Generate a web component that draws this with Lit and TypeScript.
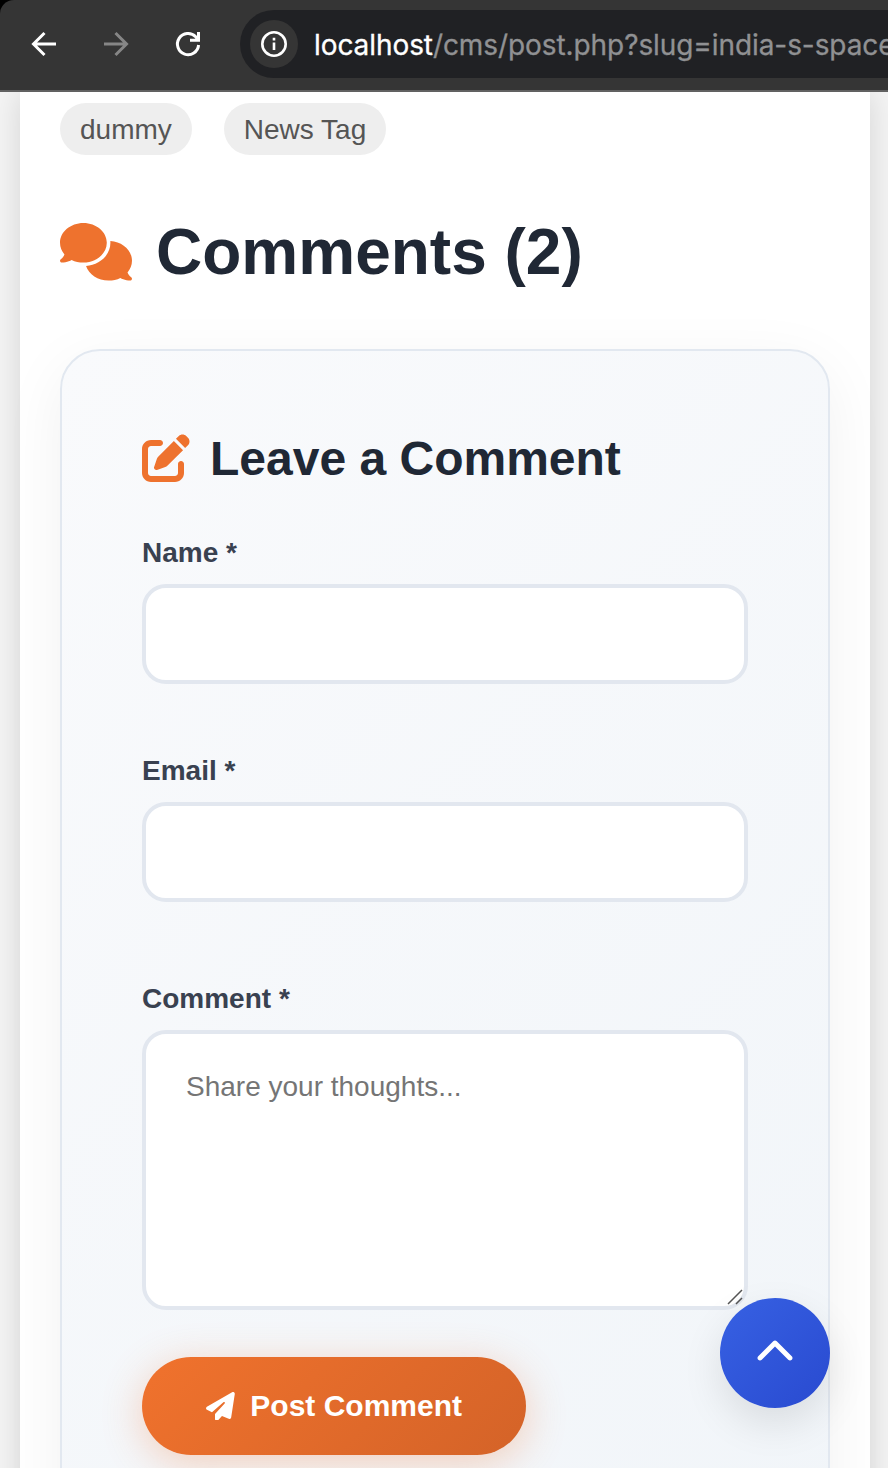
import { LitElement, html, css, svg } from "lit";
import { customElement } from "lit/decorators.js";

const icon = (cls: string, viewBox: string, d: string) =>
  html`<svg class="icon ${cls}" viewBox=${viewBox} fill="currentColor" aria-hidden="true">${svg`<path d=${d}></path>`}</svg>`;

const COMMENTS =
  "M208 352c114.9 0 208-78.8 208-176S322.9 0 208 0S0 78.8 0 176c0 38.6 14.7 74.3 39.6 103.4c-3.5 9.4-8.7 17.7-14.2 24.7c-4.8 6.2-9.7 11-13.3 14.3c-1.8 1.6-3.3 2.9-4.3 3.7c-.5 .4-.9 .7-1.1 .8l-.2 .2C1 327.2-1.4 334.4 .8 340.9S9.1 352 16 352c21.8 0 43.8-5.6 62.1-12.5c9.2-3.5 17.8-7.4 25.3-11.4C134.1 343.3 169.8 352 208 352zM448 176c0 112.3-99.1 196.9-216.5 207C255.8 457.4 336.4 512 432 512c38.2 0 73.9-8.7 104.7-23.9c7.5 4 16 7.9 25.2 11.4c18.3 6.9 40.3 12.5 62.1 12.5c6.9 0 13.1-4.5 15.2-11.1c2.1-6.6-.2-13.8-5.8-17.9l-.2-.2c-.2-.2-.6-.4-1.1-.8c-1-.8-2.5-2-4.3-3.7c-3.6-3.3-8.5-8.1-13.3-14.3c-5.5-7-10.7-15.4-14.2-24.7c24.9-29 39.6-64.7 39.6-103.4c0-92.8-84.9-168.9-192.6-175.5c.4 5.1 .6 10.3 .6 15.5z";
const EDIT =
  "M471.6 21.7c-21.9-21.9-57.3-21.9-79.2 0L362.3 51.7l97.9 97.9 30.1-30.1c21.9-21.9 21.9-57.3 0-79.2L471.6 21.7zm-299.2 220c-6.1 6.1-10.8 13.6-13.5 21.9l-29.6 88.8c-2.9 8.6-.6 18.1 5.8 24.6s15.9 8.7 24.6 5.8l88.8-29.6c8.2-2.7 15.7-7.4 21.9-13.5L437.7 172.3 339.7 74.3 172.4 241.7zM96 64C43 64 0 107 0 160L0 416c0 53 43 96 96 96l256 0c53 0 96-43 96-96l0-96c0-17.7-14.3-32-32-32s-32 14.3-32 32l0 96c0 17.7-14.3 32-32 32L96 448c-17.7 0-32-14.3-32-32l0-256c0-17.7 14.3-32 32-32l96 0c17.7 0 32-14.3 32-32s-14.3-32-32-32L96 64z";
const PLANE =
  "M498.1 5.6c10.1 7 15.4 19.1 13.5 31.2l-64 416c-1.5 9.7-7.4 18.2-16 23s-18.9 5.4-28 1.6L284 427.7l-68.5 74.1c-8.9 9.7-22.9 12.9-35.2 8.1S160 493.2 160 480l0-83.6c0-4 1.5-7.8 4.2-10.8L331.8 202.8c5.8-6.3 5.6-16-.4-22s-15.7-6.4-22-.7L106 360.8 17.7 316.6C7.1 311.3 .3 300.7 0 288.9s5.9-22.8 16.1-28.7l448-256c10.7-6.1 23.9-5.5 34 1.4z";
const CHEVRON =
  "M233.4 105.4c12.5-12.5 32.8-12.5 45.3 0l192 192c12.5 12.5 12.5 32.8 0 45.3s-32.8 12.5-45.3 0L256 173.3 86.6 342.6c-12.5 12.5-32.8 12.5-45.3 0s-12.5-32.8 0-45.3l192-192z";

@customElement("browser-bar")
export class BrowserBar extends LitElement {
  static styles = css`
    :host { display: block; background: #000; }
    .bar {
      box-sizing: border-box; height: 92px; display: flex; align-items: flex-start;
      background: #353535; border-bottom: 2px solid #616161;
      border-top-left-radius: 14px; padding: 10px 0 0 28px; overflow: hidden;
    }
    .nav { display: flex; gap: 40px; height: 68px; align-items: center; width: 212px; flex: none; }
    .nav svg { width: 32px; height: 32px; flex: none; fill: none; stroke: #fff; stroke-width: 3; }
    .nav .dim { stroke: #868686; }
    .address {
      flex: 1 0 auto; height: 68px; border-radius: 34px 0 0 34px; background: #202124;
      display: flex; align-items: center; padding-left: 10px; gap: 16px;
      font: 28px/34px Inter, sans-serif; color: #909193; white-space: nowrap;
    }
    .info {
      width: 48px; height: 48px; border-radius: 50%; background: #353535;
      display: grid; place-items: center;
    }
    .info svg { width: 28px; height: 28px; fill: none; stroke: #fff; }
    .url { letter-spacing: -0.08px; padding-top: 1px; }
    .host { color: #fff; -webkit-text-stroke: 0.3px #fff; }
    .path { -webkit-text-stroke: 0.3px #909193; }
  `;
  render() {
    return html`<div class="bar">
      <div class="nav">
        <svg viewBox="0 0 32 32"><path d="M28 16H6M16.500 5L5.500 16L16.500 27"></path></svg>
        <svg class="dim" viewBox="0 0 32 32"><path d="M4 16H26M15.500 5L26.500 16L15.500 27"></path></svg>
        <svg viewBox="0 0 32 32"><path d="M26.600 17A10.600 10.600 0 1 1 23.700 8.700L26 11.500M26.500 4V12.300H18"></path></svg>
      </div>
      <div class="address">
        <span class="info"><svg viewBox="0 0 28 28">
          <circle cx="14" cy="14" r="11.700" stroke-width="2.600"></circle>
          <path d="M14 12.500V20M14 7.800V10.400" stroke-width="2.600"></path>
        </svg></span>
        <span class="url"><span class="host">localhost</span><span class="path">/cms/post.php?slug=india-s-space</span></span>
      </div>
    </div>`;
  }
}

@customElement("comment-form")
export class CommentForm extends LitElement {
  static styles = css`
    :host { display: block; }
    .card {
      box-sizing: border-box; height: 1240px; padding: 79px 80px 80px; border: 2px solid #e2e8f0; border-radius: 40px;
      background: linear-gradient(135deg, #f9fafc 0%, #f1f5f9 100%);
      box-shadow: 0 16px 64px rgba(0, 0, 0, 0.06);
      font-family: "Liberation Sans", Arial, sans-serif;
    }
    .icon { display: block; flex: none; }
    h3 {
      margin: 0 0 50px; height: 56px; display: flex; align-items: center; gap: 20px;
      font-size: 48px; line-height: 56px; color: #202835;
    }
    h3 span { padding-top: 1px; }
    .edit { width: 48px; height: 48px; color: #ee722e; }
    label { display: block; font-weight: bold; font-size: 28px; line-height: 34px; color: #394150; }
    input, textarea {
      box-sizing: border-box; display: block; width: 606px; margin: 14px 0 0;
      border: 4px solid #e2e7ef; border-radius: 24px; background: #fff; outline: none;
      font: 28px/34px "Liberation Sans", Arial, sans-serif;
    }
    input { height: 100px; padding: 0 40px; }
    textarea { height: 280px; padding: 36px 40px; resize: none; }
    textarea::placeholder { color: #757575; opacity: 1; }
    .field { margin-bottom: 70px; }
    .field.wide { margin-bottom: 80px; }
    .area { position: relative; margin-bottom: 47px; }
    .grip { position: absolute; right: 3px; bottom: 4px; width: 18px; height: 18px; stroke: #555; stroke-width: 1.500; }
    button {
      display: flex; align-items: center; gap: 16px; width: 384px; height: 98px; padding: 0 64px;
      border: 0; border-radius: 49px; color: #fff; white-space: nowrap;
      background: linear-gradient(135deg, #f0722d, #d46328);
      box-shadow: 0 8px 40px rgba(238, 114, 46, 0.3);
      font: bold 30px/36px "Liberation Sans", Arial, sans-serif;
    }
    .plane { width: 28.800px; height: 28.800px; margin-right: -0.500px; }
  `;
  render() {
    return html`<div class="card">
      <h3>${icon("edit", "0 0 512 512", EDIT)}<span>Leave a Comment</span></h3>
      <div class="field"><label for="name">Name *</label><input id="name" /></div>
      <div class="field wide"><label for="email">Email *</label><input id="email" /></div>
      <div class="area">
        <label for="comment">Comment *</label>
        <textarea id="comment" placeholder="Share your thoughts..."></textarea>
        <svg class="grip" viewBox="0 0 18 18"><path d="M1 16L15 2M9 16L15 10"></path></svg>
      </div>
      <button>${icon("plane", "0 0 512 512", PLANE)}<span>Post Comment</span></button>
    </div>`;
  }
}

@customElement("app-root")
export class AppRoot extends LitElement {
  static styles = css`
    :host {
      display: flex; flex-direction: column; position: relative; height: 1468px; overflow: hidden;
      background: #f4f4f4; font-family: "Liberation Sans", Arial, sans-serif;
    }
    browser-bar { flex: none; position: relative; z-index: 1; }
    .page {
      box-sizing: border-box; flex: none; height: 1500px; width: 850px; margin-left: 20px;
      padding: 11px 40px 0; background: #fff; box-shadow: 0 0 30px rgba(0, 0, 0, 0.13);
    }
    .tags { display: flex; gap: 32px; }
    .tag {
      padding: 11px 20px 9px; border-radius: 26px; background: #eee; color: #555;
      font-size: 28px; line-height: 32px;
    }
    h2 {
      margin: 60px 0; height: 74px; display: flex; align-items: center; gap: 24px;
      font-size: 64px; line-height: 74px; color: #202835;
    }
    .icon { display: block; flex: none; }
    .comments { width: 72px; height: 57.600px; color: #ee722e; }
    .top {
      position: absolute; left: 720px; top: 1298px; width: 110px; height: 110px; padding: 0;
      display: grid; place-items: center; border: 0; border-radius: 50%; color: #fff;
      background: linear-gradient(135deg, #3761e3, #294ad0);
      box-shadow: 0 16px 40px rgba(0, 0, 0, 0.1);
    }
    .chevron { width: 40px; height: 40px; }
  `;
  render() {
    return html`
      <browser-bar></browser-bar>
      <main class="page">
        <div class="tags"><span class="tag">dummy</span><span class="tag">News Tag</span></div>
        <h2>${icon("comments", "0 0 640 512", COMMENTS)}<span>Comments (2)</span></h2>
        <comment-form></comment-form>
      </main>
      <button class="top" aria-label="Back to top">${icon("chevron", "0 0 512 512", CHEVRON)}</button>
    `;
  }
}
